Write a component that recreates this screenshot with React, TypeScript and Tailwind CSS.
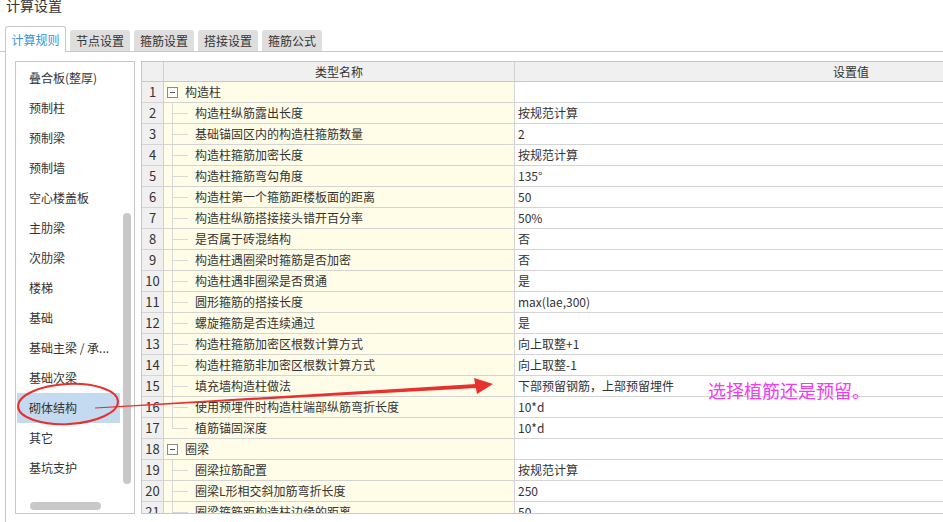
import React from "react";

type Row = { n: number; name: string; value?: string; group?: boolean; last?: boolean };

const rows: Row[] = [
  { n: 1, name: "构造柱", group: true },
  { n: 2, name: "构造柱纵筋露出长度", value: "按规范计算" },
  { n: 3, name: "基础锚固区内的构造柱箍筋数量", value: "2" },
  { n: 4, name: "构造柱箍筋加密长度", value: "按规范计算" },
  { n: 5, name: "构造柱箍筋弯勾角度", value: "135°" },
  { n: 6, name: "构造柱第一个箍筋距楼板面的距离", value: "50" },
  { n: 7, name: "构造柱纵筋搭接接头错开百分率", value: "50%" },
  { n: 8, name: "是否属于砖混结构", value: "否" },
  { n: 9, name: "构造柱遇圈梁时箍筋是否加密", value: "否" },
  { n: 10, name: "构造柱遇非圈梁是否贯通", value: "是" },
  { n: 11, name: "圆形箍筋的搭接长度", value: "max(lae,300)" },
  { n: 12, name: "螺旋箍筋是否连续通过", value: "是" },
  { n: 13, name: "构造柱箍筋加密区根数计算方式", value: "向上取整+1" },
  { n: 14, name: "构造柱箍筋非加密区根数计算方式", value: "向上取整-1" },
  { n: 15, name: "填充墙构造柱做法", value: "下部预留钢筋，上部预留埋件" },
  { n: 16, name: "使用预埋件时构造柱端部纵筋弯折长度", value: "10*d" },
  { n: 17, name: "植筋锚固深度", value: "10*d", last: true },
  { n: 18, name: "圈梁", group: true },
  { n: 19, name: "圈梁拉筋配置", value: "按规范计算" },
  { n: 20, name: "圈梁L形相交斜加筋弯折长度", value: "250" },
  { n: 21, name: "圈梁箍筋距构造柱边缘的距离", value: "50" },
];

const menu = [
  "叠合板(整厚)",
  "预制柱",
  "预制梁",
  "预制墙",
  "空心楼盖板",
  "主肋梁",
  "次肋梁",
  "楼梯",
  "基础",
  "基础主梁 / 承...",
  "基础次梁",
  "砌体结构",
  "其它",
  "基坑支护",
];

const tabs = ["节点设置", "箍筋设置", "搭接设置", "箍筋公式"];

function TableRow({ r }: { r: Row }) {
  return (
    <div className="flex h-[21px] border-b border-[#d4d4d4]">
      <div className="w-[22px] shrink-0 bg-[#f0f0f0] border-r border-[#d0d0d0] flex items-center justify-center text-[13px] text-[#333]">
        {r.n}
      </div>
      <div className="relative w-[351px] shrink-0 bg-[#fffde8] border-r border-[#d4d4d4] flex items-center text-[12px] text-[#333]">
        {r.group ? (
          <>
            <span className="ml-[3px] w-[11px] h-[11px] border border-[#8a8a8a] bg-white flex items-center justify-center">
              <span className="w-[5px] h-px bg-[#555]" />
            </span>
            <span className="ml-[7px]">{r.name}</span>
          </>
        ) : (
          <>
            <span
              className={
                r.last
                  ? "absolute left-[8px] top-0 h-[10px] w-px bg-[#d8d8d8]"
                  : "absolute left-[8px] top-0 bottom-0 w-px bg-[#d8d8d8]"
              }
            />
            <span className="absolute left-[8px] top-[10px] w-[16px] h-px bg-[#d8d8d8]" />
            <span className="ml-[31px]">{r.name}</span>
          </>
        )}
      </div>
      <div className="w-[672px] shrink-0 bg-white flex items-center pl-[3px] text-[12px] text-[#333]">
        {r.value}
      </div>
    </div>
  );
}

export default function App() {
  return (
    <div
      className="relative w-[943px] h-[522px] overflow-hidden bg-white text-[#333]"
      style={{ fontFamily: '"Noto Sans CJK SC", "Microsoft YaHei", sans-serif' }}
    >
      <div className="pl-[6px] h-[29px] text-[14px] leading-[14px] -mt-[2px] text-[#333]">计算设置</div>

      {/* tabs */}
      <div className="flex items-end h-[25px] pl-[5px] border-b border-[#c8c8c8]">
        <div className="h-[26px] w-[61px] -mb-px bg-white border border-b-0 border-[#c8c8c8] rounded-t-[3px] flex items-center justify-center text-[12px] text-[#3b8fe0]">
          计算规则
        </div>
        {tabs.map((t) => (
          <div
            key={t}
            className="ml-[4px] h-[21px] w-[60px] bg-[#dedede] rounded-t-[3px] flex items-center justify-center text-[12px] text-[#333]"
          >
            {t}
          </div>
        ))}
      </div>

      {/* body */}
      <div className="ml-[5px] border-l border-[#c8c8c8] pl-[9px] pt-[9px] flex gap-[6px] h-[480px]">
        {/* left list */}
        <div className="relative w-[120px] h-[453px] shrink-0 border border-[#c8c8c8] bg-white overflow-hidden">
          <div className="pt-[1px] pl-[1px] w-[104px]">
            {menu.map((m) => (
              <div
                key={m}
                className={
                  "h-[30px] flex items-center pl-[12px] text-[12px] text-[#333] whitespace-nowrap " +
                  (m === "砌体结构" ? "bg-[#c4daf0]" : "")
                }
              >
                {m}
              </div>
            ))}
          </div>
          <div className="absolute left-[107px] top-[151px] w-[8px] h-[271px] rounded-full bg-[#c8c8c8]" />
          <div className="absolute left-[14px] top-[440px] w-[71px] h-[8px] rounded-full bg-[#c8c8c8]" />
        </div>

        {/* table */}
        <div className="h-[453px] w-[1048px] shrink-0 border border-[#c8c8c8] border-r-0 overflow-hidden bg-white">
          <div className="flex h-[20px] border-b border-[#c8c8c8] bg-[#f0f0f0] text-[12px] text-[#333]">
            <div className="w-[22px] shrink-0 border-r border-[#d0d0d0]" />
            <div className="w-[351px] shrink-0 border-r border-[#d0d0d0] flex items-center justify-center">类型名称</div>
            <div className="w-[672px] shrink-0 flex items-center justify-center">设置值</div>
          </div>
          {rows.map((r) => (
            <TableRow key={r.n} r={r} />
          ))}
        </div>
      </div>

      {/* annotations */}
      <svg className="absolute left-0 top-0 pointer-events-none" width="943" height="522">
        <ellipse cx="68" cy="404" rx="50" ry="20" fill="none" stroke="#e8302e" strokeWidth="2" transform="rotate(-3 68 404)" />
        <polygon points="95,407.5 476,384 477,388 95,408.5" fill="#e8302e" />
        <polygon points="474,378 493,384 477,394" fill="#e8302e" />
      </svg>
      <div className="absolute left-[708px] top-[380px] text-[18px] leading-[20px] text-[#f03cf0] whitespace-nowrap">
        选择植筋还是预留。
      </div>
    </div>
  );
}
